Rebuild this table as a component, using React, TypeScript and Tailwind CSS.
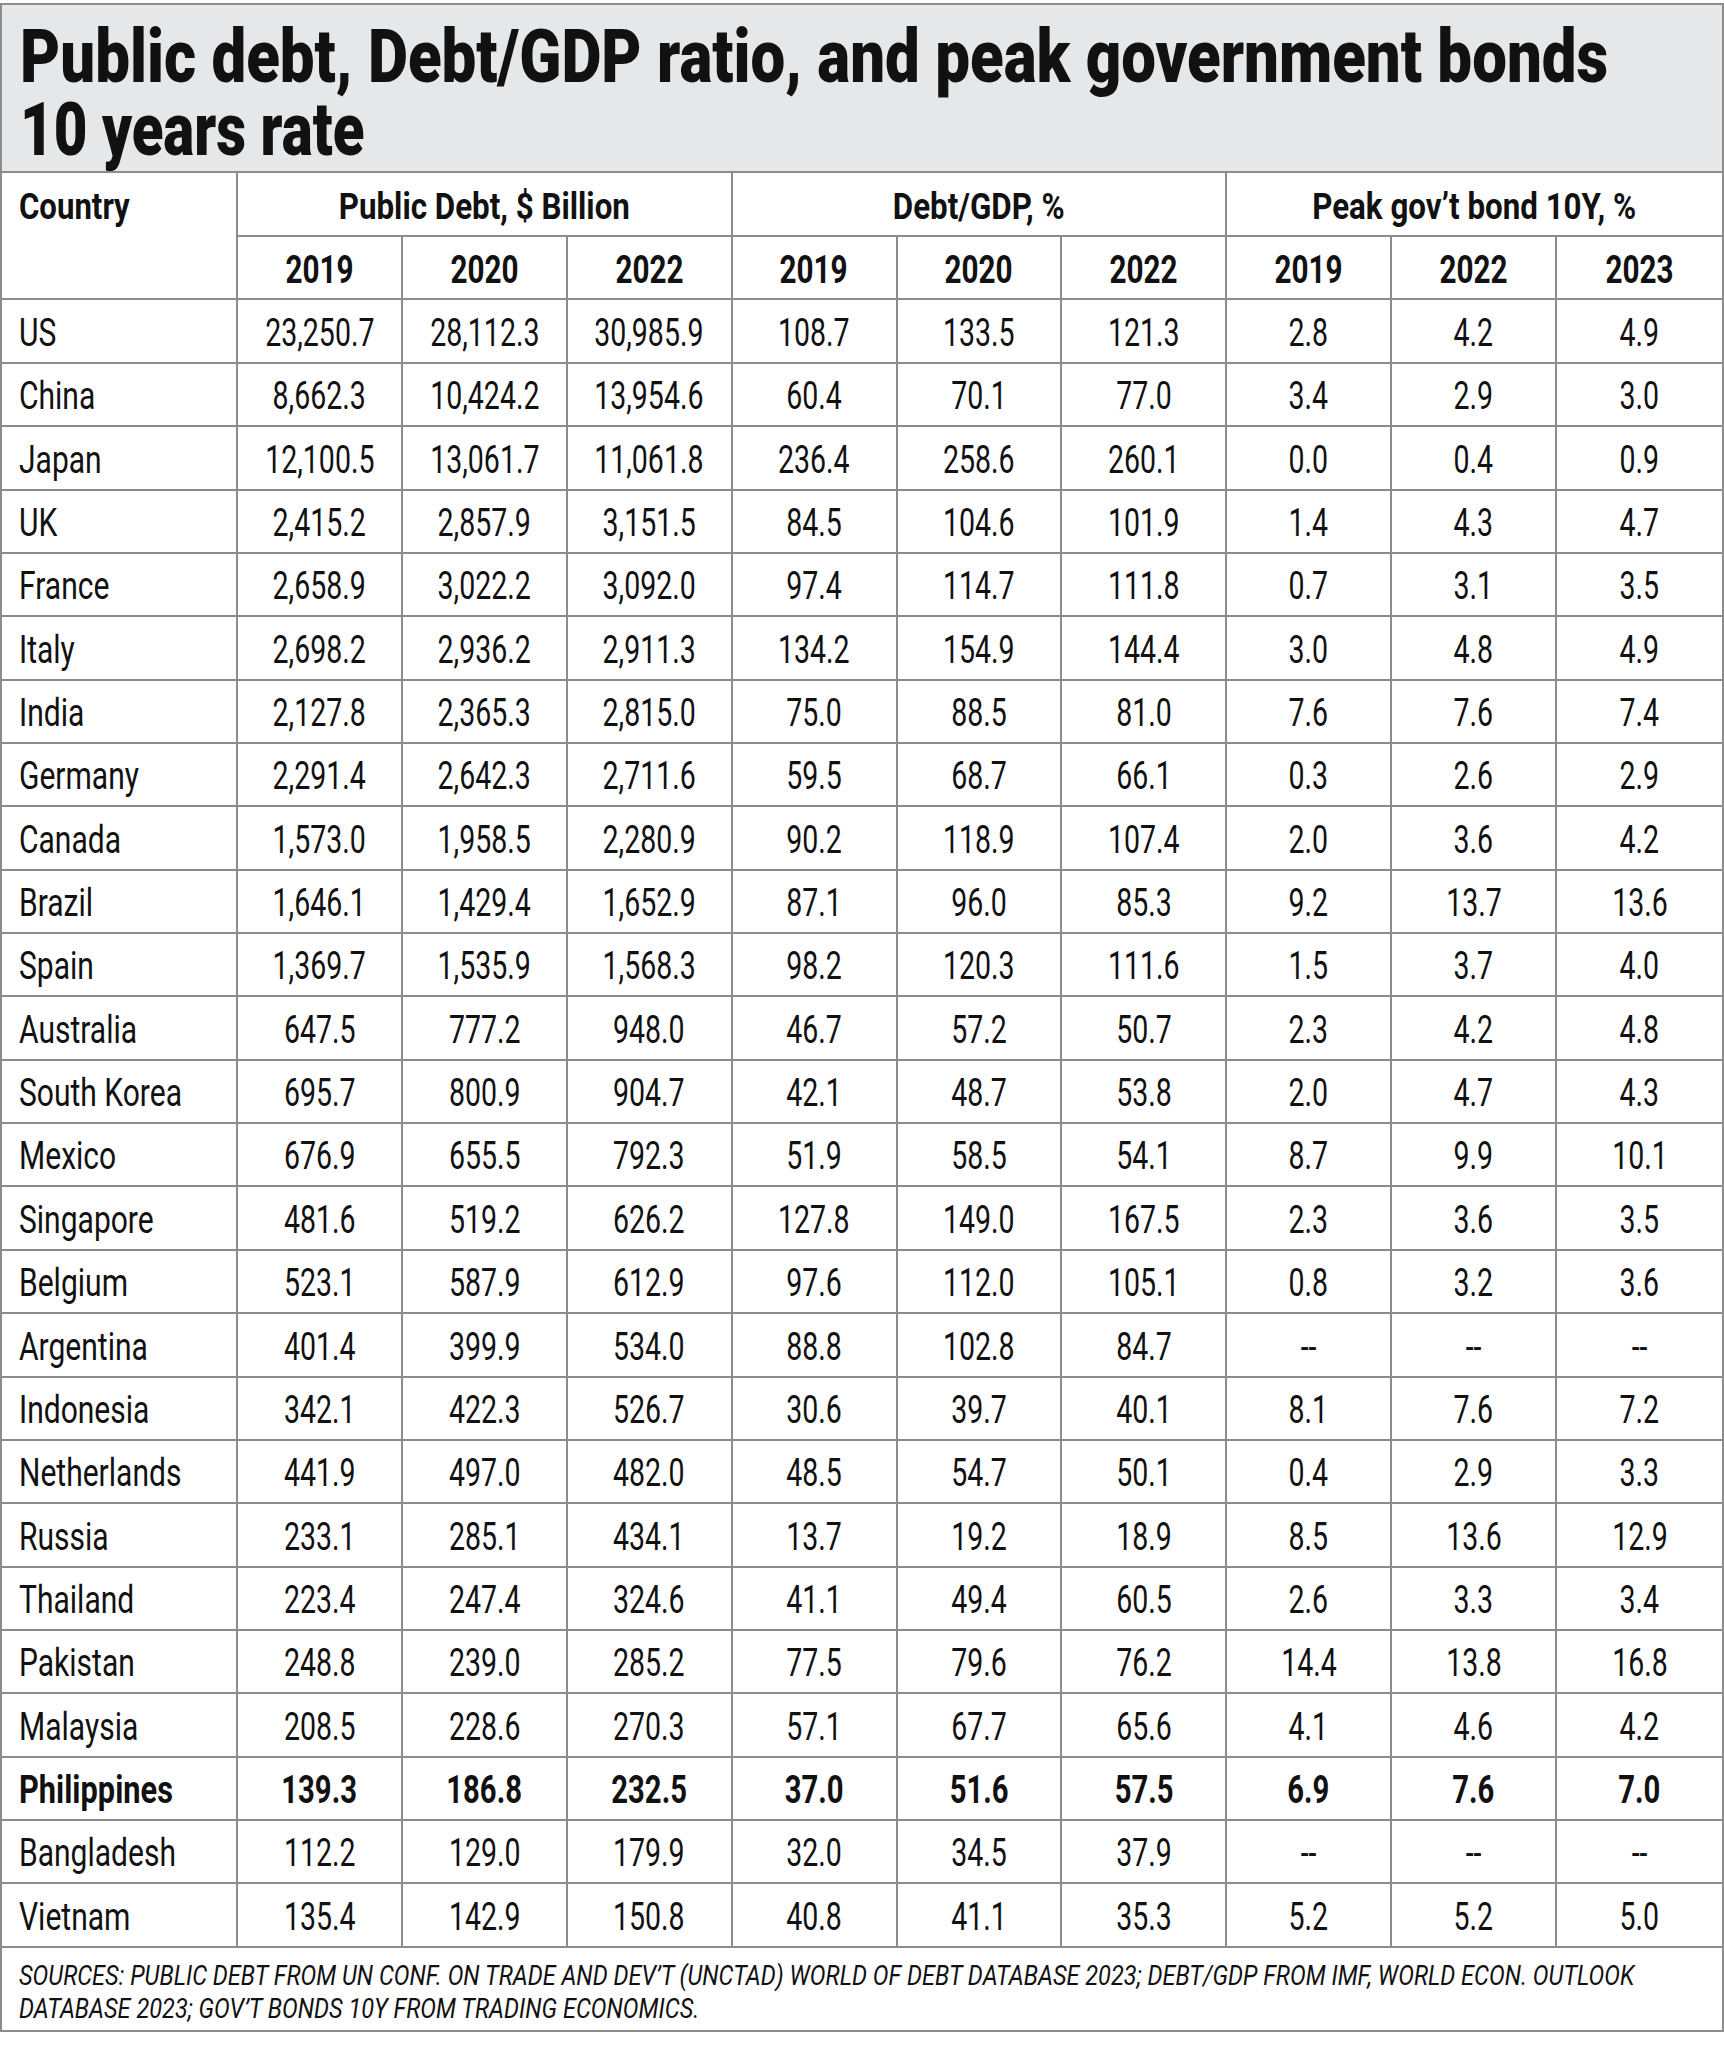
import React from "react";

const font = { fontFamily: 'Roboto, "Liberation Sans", sans-serif' };

const rows: string[][] = [
  ["US", "23,250.7", "28,112.3", "30,985.9", "108.7", "133.5", "121.3", "2.8", "4.2", "4.9"],
  ["China", "8,662.3", "10,424.2", "13,954.6", "60.4", "70.1", "77.0", "3.4", "2.9", "3.0"],
  ["Japan", "12,100.5", "13,061.7", "11,061.8", "236.4", "258.6", "260.1", "0.0", "0.4", "0.9"],
  ["UK", "2,415.2", "2,857.9", "3,151.5", "84.5", "104.6", "101.9", "1.4", "4.3", "4.7"],
  ["France", "2,658.9", "3,022.2", "3,092.0", "97.4", "114.7", "111.8", "0.7", "3.1", "3.5"],
  ["Italy", "2,698.2", "2,936.2", "2,911.3", "134.2", "154.9", "144.4", "3.0", "4.8", "4.9"],
  ["India", "2,127.8", "2,365.3", "2,815.0", "75.0", "88.5", "81.0", "7.6", "7.6", "7.4"],
  ["Germany", "2,291.4", "2,642.3", "2,711.6", "59.5", "68.7", "66.1", "0.3", "2.6", "2.9"],
  ["Canada", "1,573.0", "1,958.5", "2,280.9", "90.2", "118.9", "107.4", "2.0", "3.6", "4.2"],
  ["Brazil", "1,646.1", "1,429.4", "1,652.9", "87.1", "96.0", "85.3", "9.2", "13.7", "13.6"],
  ["Spain", "1,369.7", "1,535.9", "1,568.3", "98.2", "120.3", "111.6", "1.5", "3.7", "4.0"],
  ["Australia", "647.5", "777.2", "948.0", "46.7", "57.2", "50.7", "2.3", "4.2", "4.8"],
  ["South Korea", "695.7", "800.9", "904.7", "42.1", "48.7", "53.8", "2.0", "4.7", "4.3"],
  ["Mexico", "676.9", "655.5", "792.3", "51.9", "58.5", "54.1", "8.7", "9.9", "10.1"],
  ["Singapore", "481.6", "519.2", "626.2", "127.8", "149.0", "167.5", "2.3", "3.6", "3.5"],
  ["Belgium", "523.1", "587.9", "612.9", "97.6", "112.0", "105.1", "0.8", "3.2", "3.6"],
  ["Argentina", "401.4", "399.9", "534.0", "88.8", "102.8", "84.7", "--", "--", "--"],
  ["Indonesia", "342.1", "422.3", "526.7", "30.6", "39.7", "40.1", "8.1", "7.6", "7.2"],
  ["Netherlands", "441.9", "497.0", "482.0", "48.5", "54.7", "50.1", "0.4", "2.9", "3.3"],
  ["Russia", "233.1", "285.1", "434.1", "13.7", "19.2", "18.9", "8.5", "13.6", "12.9"],
  ["Thailand", "223.4", "247.4", "324.6", "41.1", "49.4", "60.5", "2.6", "3.3", "3.4"],
  ["Pakistan", "248.8", "239.0", "285.2", "77.5", "79.6", "76.2", "14.4", "13.8", "16.8"],
  ["Malaysia", "208.5", "228.6", "270.3", "57.1", "67.7", "65.6", "4.1", "4.6", "4.2"],
  ["Philippines", "139.3", "186.8", "232.5", "37.0", "51.6", "57.5", "6.9", "7.6", "7.0"],
  ["Bangladesh", "112.2", "129.0", "179.9", "32.0", "34.5", "37.9", "--", "--", "--"],
  ["Vietnam", "135.4", "142.9", "150.8", "40.8", "41.1", "35.3", "5.2", "5.2", "5.0"],
];

const groups = ["Public Debt, $ Billion", "Debt/GDP, %", "Peak gov\u2019t bond 10Y, %"];
const years = ["2019", "2020", "2022", "2019", "2020", "2022", "2019", "2022", "2023"];

const cols = "grid grid-cols-[236px_repeat(9,minmax(0,1fr))]";
const line = "border-[#8c8c8c]";

// squeeze factor per kind of cell, the reference uses a condensed face
const squeeze = (first: boolean, bold: boolean) => {
  if (first) return bold ? "origin-left scale-x-[0.81]" : "origin-left scale-x-[0.79]";
  return bold ? "scale-x-[0.77]" : "scale-x-[0.75]";
};

export default function App() {
  return (
    <div className="w-[1724px] bg-white pt-[3px] text-[#111]" style={font}>
      <div className={`border-2 ${line}`}>
        {/* title */}
        <div className={`bg-[#e6e7e8] border-b-2 ${line} h-[168px] overflow-hidden pl-[18px] pt-[15px]`}>
          <h1 className="text-[74px] leading-[73px] font-black whitespace-nowrap">
            <span className="block origin-left scale-x-[0.835]">
              Public debt, Debt/GDP ratio, and peak government bonds
            </span>
            <span className="block origin-left scale-x-[0.786]">10 years rate</span>
          </h1>
        </div>

        {/* header */}
        <div className={`${cols} grid-rows-[64px_63px]`}>
          <div className={`row-span-2 border-r-2 border-b-2 ${line}`}>
            <div className="h-[62px] flex items-center pt-[6px] pl-[17px] text-[36px] font-bold whitespace-nowrap">
              <span className="inline-block origin-left scale-x-[0.865]">Country</span>
            </div>
          </div>
          {groups.map((g, i) => (
            <div
              key={g}
              className={`col-span-3 flex items-center justify-center pt-[6px] border-b-2 ${line} text-[36px] font-bold whitespace-nowrap ${
                i < 2 ? "border-r-2" : ""
              }`}
            >
              <span className="inline-block scale-x-[0.87]">{g}</span>
            </div>
          ))}
          {years.map((y, i) => (
            <div
              key={i}
              className={`flex items-center justify-center pt-[5px] border-b-2 ${line} text-[38px] font-bold ${
                i < 8 ? "border-r-2" : ""
              }`}
            >
              <span className="inline-block scale-x-[0.78]">{y}</span>
            </div>
          ))}
        </div>

        {/* rows */}
        {rows.map((r) => {
          const bold = r[0] === "Philippines";
          return (
            <div key={r[0]} className={`${cols} h-[63.35px]`}>
              {r.map((v, i) => (
                <div
                  key={i}
                  className={`flex items-center pt-[5px] border-b-2 ${line} text-[38px] whitespace-nowrap ${
                    bold ? "font-bold" : "font-normal"
                  } ${i === 0 ? "pl-[17px]" : "justify-center"} ${i < 9 ? "border-r-2" : ""}`}
                >
                  <span className={`inline-block ${squeeze(i === 0, bold)}`}>{v}</span>
                </div>
              ))}
            </div>
          );
        })}

        {/* sources */}
        <div className="h-[83px] overflow-hidden pl-[17px] pt-[12px] text-[28px] leading-[33px] italic font-normal whitespace-nowrap">
          <span className="block origin-left scale-x-[0.842]">
            SOURCES: PUBLIC DEBT FROM UN CONF. ON TRADE AND DEV&rsquo;T (UNCTAD) WORLD OF DEBT DATABASE 2023; DEBT/GDP
            FROM IMF, WORLD ECON. OUTLOOK
          </span>
          <span className="block origin-left scale-x-[0.842]">
            DATABASE 2023; GOV&rsquo;T BONDS 10Y FROM TRADING ECONOMICS.
          </span>
        </div>
      </div>
    </div>
  );
}
